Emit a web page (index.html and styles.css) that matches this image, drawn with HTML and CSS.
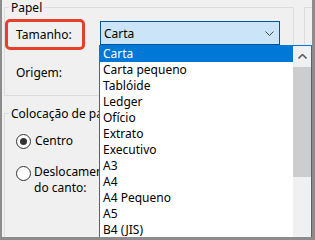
FILE: index.html
```html
<!DOCTYPE html>
<html lang="pt">

<head>
    <meta charset="UTF-8">
    <meta name="viewport" content="width=device-width, initial-scale=1.0">
    <title>Configurar página</title>
    <link rel="stylesheet" href="styles.css">
</head>

<body>
    <div class="window">
        <div class="panel">
            <div class="col">
                <fieldset class="group paper">
                    <legend>Papel</legend>
                    <div class="row">
                        <label class="field_label highlight">Tamanho:</label>
                        <div class="combo">
                            <span>Carta</span>
                            <svg width="9" height="5" viewBox="0 0 9 5"><polyline points="0.5,0.5 4.5,4.5 8.5,0.5" fill="none" stroke="#444" stroke-width="1"/></svg>
                        </div>
                    </div>
                    <div class="row origin">
                        <label class="field_label">Origem:</label>
                    </div>
                </fieldset>
                <fieldset class="group placement">
                    <legend>Colocação de página</legend>
                    <div class="radio_row">
                        <span class="radio checked"></span>
                        <span>Centro</span>
                    </div>
                    <div class="radio_row two_lines">
                        <span class="radio"></span>
                        <span>Deslocamento<br>do canto:</span>
                    </div>
                </fieldset>
            </div>
            <div class="side"></div>
        </div>

        <!-- lista aberta do combo Tamanho, por cima do resto -->
        <div class="dropdown">
            <ul class="items">
                <li class="selected">Carta</li>
                <li>Carta pequeno</li>
                <li>Tablóide</li>
                <li>Ledger</li>
                <li>Ofício</li>
                <li>Extrato</li>
                <li>Executivo</li>
                <li>A3</li>
                <li>A4</li>
                <li>A4 Pequeno</li>
                <li>A5</li>
                <li>B4 (JIS)</li>
            </ul>
            <div class="scrollbar">
                <div class="sb_up">
                    <svg width="9" height="5" viewBox="0 0 9 5"><polyline points="0.5,4.5 4.5,0.5 8.5,4.5" fill="none" stroke="#606060" stroke-width="1.6"/></svg>
                </div>
                <div class="sb_thumb"></div>
            </div>
        </div>
    </div>
</body>

</html>
```

FILE: styles.css
```css
* {
    margin: 0;
    padding: 0;
    box-sizing: border-box;
}

body {
    background-color: #f0f0f0;
    font: 12px "Noto Sans", "Open Sans", sans-serif;
    color: #000;
}

.window {
    position: relative;
    width: 315px;
    height: 240px;
    overflow: hidden;
    border-left: 2px solid #8c8c8c;
    border-right: 3px solid #8c8c8c;
    border-bottom: 3px solid #8c8c8c;
    background-color: #f0f0f0;
}

.panel {
    display: flex;
}

.col {
    margin-left: 2px;
}

/* group boxes */

.group {
    width: 290px;
    border: 1px solid #dcdcdc;
}

.group>legend {
    margin-left: 4px;
    padding: 0 2px;
    line-height: 15px;
    white-space: nowrap;
}

.paper {
    padding: 4px 0 14px 0;
}

.placement {
    margin-top: 10px;
    padding: 12px 0 0 0;
    height: 200px;
}

.side {
    flex-grow: 1;
    margin: 7px 0 0 10px;
    height: 240px;
    border-top: 1px solid #dcdcdc;
    border-left: 1px solid #dcdcdc;
}

.row {
    display: flex;
    align-items: center;
}

.field_label {
    line-height: 16px;
}

.highlight {
    display: flex;
    align-items: center;
    width: 80px;
    height: 31px;
    padding-left: 8px;
    border: 3px solid #e6402a;
    border-radius: 5px;
}

.combo {
    display: flex;
    align-items: center;
    justify-content: space-between;
    align-self: flex-start;
    width: 180px;
    height: 24px;
    margin: 2px 0 0 15px;
    padding: 0 5px 0 3px;
    background-color: #cce4f7;
    border: 1px solid #005499;
}

.combo>svg {
    margin-top: 1px;
}

.origin {
    margin-top: 15px;
    padding-left: 11px;
    height: 16px;
}

/* radios */

.radio_row {
    display: flex;
    align-items: center;
    gap: 4px;
    padding-left: 11px;
    line-height: 16px;
    white-space: nowrap;
}

.two_lines {
    align-items: flex-start;
    margin-top: 15px;
    gap: 3px;
}

.two_lines>.radio {
    margin-top: 2px;
}

.radio {
    position: relative;
    width: 15px;
    height: 15px;
    flex-shrink: 0;
    border: 1px solid #333;
    border-radius: 50%;
    background-color: #fff;
}

.checked::after {
    content: "";
    position: absolute;
    left: 3px;
    top: 3px;
    width: 7px;
    height: 7px;
    border-radius: 50%;
    background-color: #333;
}

/* lista suspensa */

.dropdown {
    position: absolute;
    left: 97px;
    top: 45px;
    width: 213px;
    height: 260px;
    display: flex;
    background-color: #fff;
    border: 1px solid #0078d7;
}

.items {
    flex-grow: 1;
    list-style: none;
}

.items>li {
    height: 16px;
    line-height: 16px;
    padding-left: 3px;
    white-space: nowrap;
}

.items>.selected {
    background-color: #0078d7;
    color: #fff;
}

.scrollbar {
    width: 18px;
    background-color: #f0f0f0;
}

.sb_up {
    display: flex;
    align-items: center;
    justify-content: center;
    height: 21px;
}

.sb_thumb {
    height: 110px;
    background-color: #cdcdcd;
}
```
